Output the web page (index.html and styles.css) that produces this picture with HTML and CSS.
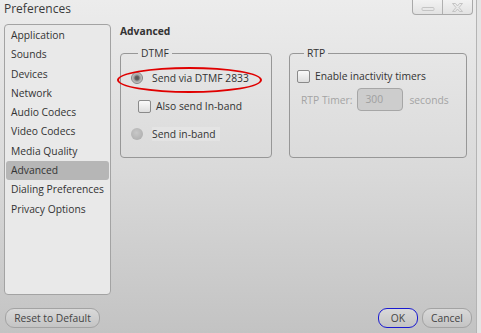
FILE: index.html
```html
<!DOCTYPE html>
<html>
	<head>
		<title>Preferences</title>
		<link rel="stylesheet" href="styles.css">
	</head>
	<body>
		<div class="window">
			<div class="titlebar">
				<span class="title">Preferences</span>
				<div class="caption">
					<span class="cbtn">
						<svg width="29" height="14" viewBox="0 0 29 14"><rect x="9" y="7.5" width="12" height="3" rx="1" fill="none" stroke="#c4c4c4"/></svg>
					</span>
					<span class="cbtn">
						<svg width="29" height="14" viewBox="0 0 29 14"><path d="M9.5 3.5h3l2 2.5 2-2.5h3l-3.5 4 3.5 4h-3l-2-2.5-2 2.5h-3l3.5-4z" fill="none" stroke="#c4c4c4"/></svg>
					</span>
				</div>
			</div>

			<div class="main">
				<ul class="sidebar">
					<li>Application</li>
					<li>Sounds</li>
					<li>Devices</li>
					<li>Network</li>
					<li>Audio Codecs</li>
					<li>Video Codecs</li>
					<li>Media Quality</li>
					<li class="selected">Advanced</li>
					<li>Dialing Preferences</li>
					<li>Privacy Options</li>
				</ul>

				<div class="content">
					<div class="heading">Advanced</div>
					<div class="groups">
						<fieldset class="group dtmf">
							<legend>DTMF</legend>
							<div class="row">
								<span class="radio checked"></span>
								<span>Send via DTMF 2833</span>
							</div>
							<div class="row sub">
								<span class="check"></span>
								<span>Also send In-band</span>
							</div>
							<div class="row">
								<span class="radio off"></span>
								<span class="faint">Send in-band</span>
							</div>
							<div class="mark"></div>
						</fieldset>

						<fieldset class="group rtp">
							<legend>RTP</legend>
							<div class="row">
								<span class="check"></span>
								<span>Enable inactivity timers</span>
							</div>
							<div class="row timer">
								<span class="dim">RTP Timer:</span>
								<span class="field">300</span>
								<span class="dim">seconds</span>
							</div>
						</fieldset>
					</div>
				</div>
			</div>

			<div class="footer">
				<button class="btn reset">Reset to Default</button>
				<button class="btn ok">OK</button>
				<button class="btn cancel">Cancel</button>
			</div>
		</div>
	</body>
</html>
```

FILE: styles.css
```css
body
{
	margin : 0;
	background : #e4e4e4;
	font-family : "Open Sans", "Noto Sans", sans-serif;
	font-size : 10.3px;
	color : #333;
}
.window
{
	width : 476px;
	height : 333px;
	border-right : 1px solid #b4b4b4;
	background : linear-gradient(#ececec, #dadada 50%, #c3c3c3);
	display : flex;
	flex-direction : column;
}
.titlebar
{
	height : 24px;
	display : flex;
	align-items : flex-start;
}
.title
{
	font-size : 12px;
	line-height : 18px;
	padding-left : 4px;
	color : #3a3a3a;
}
.caption
{
	margin-left : auto;
	margin-right : 3px;
	display : flex;
	border : 1px solid #a9a9a9;
	border-top : none;
	border-radius : 0 0 4px 4px;
	background : linear-gradient(#f2f2f2, #e2e2e2);
	height : 14px;
}
.cbtn
{
	width : 29px;
	height : 14px;
	display : flex;
}
.cbtn + .cbtn
{
	border-left : 1px solid #b0b0b0;
}
.main
{
	display : flex;
	padding-left : 4px;
}
.sidebar
{
	list-style : none;
	margin : 0;
	padding : 1px 1px 0 1px;
	width : 103px;
	height : 268px;
	background : #e9e9e9;
	border : 1px solid #a3a3a3;
	border-radius : 4px;
}
.sidebar li
{
	line-height : 19.3px;
	padding-left : 5px;
	margin-left : 0;
	white-space : nowrap;
}
.sidebar .selected
{
	background : #b6b6b6;
	border-radius : 3px;
}
.content
{
	margin-left : 9px;
}
.heading
{
	font-weight : bold;
	line-height : 14px;
	margin-bottom : 8px;
}
.groups
{
	display : flex;
	gap : 17px;
}
.group
{
	margin : 0;
	padding : 0;
	border : 1px solid #979797;
	border-radius : 4px;
	height : 112px;
	box-sizing : border-box;
	position : relative;
}
.group legend
{
	padding : 0 3px;
	margin-left : 7px;
	line-height : 14px;
}
.dtmf
{
	width : 152px;
	padding : 8px 0 0 10px;
}
.rtp
{
	width : 178px;
	padding : 6px 0 0 7px;
}
.row
{
	display : flex;
	align-items : center;
	height : 20px;
	margin-bottom : 8px;
	white-space : nowrap;
}
.radio
{
	width : 12px;
	height : 12px;
	border-radius : 50%;
	margin-right : 9px;
	box-sizing : border-box;
}
.radio.checked
{
	border : 1px solid #858585;
	background : radial-gradient(circle, #555 0, #666 2px, #9a9a9a 3px, #c8c8c8 5px);
}
.radio.off
{
	background : radial-gradient(circle at 45% 40%, #c8c8c8, #a9a9a9);
}
.check
{
	width : 13px;
	height : 13px;
	box-sizing : border-box;
	border : 1px solid #8a8a8a;
	border-radius : 2px;
	background : linear-gradient(#fafafa, #dedede);
	margin-right : 5px;
}
.sub
{
	padding-left : 7px;
}
.faint
{
	background : rgba(255, 255, 255, 0.18);
	padding-right : 4px;
}
.mark
{
	position : absolute;
	left : -4px;
	top : 7px;
	width : 141px;
	height : 22px;
	border : 2px solid #e00000;
	border-radius : 50%;
}
.timer
{
	height : 23px;
	margin-top : -6px;
	padding-left : 4px;
}
.dim
{
	color : #a4a4a4;
}
.field
{
	width : 46px;
	height : 23px;
	box-sizing : border-box;
	border : 1px solid #a6a6a6;
	border-radius : 4px;
	background : #cdcdcd;
	color : #a0a0a0;
	line-height : 21px;
	padding-left : 7px;
	margin : 0 6px 0 5px;
}
.footer
{
	display : flex;
	padding : 13px 4px 0 5px;
	gap : 4px;
}
.btn
{
	font-family : "Open Sans", "Noto Sans", sans-serif;
	font-size : 10.3px;
	color : #444;
	height : 20px;
	padding : 0;
	border : 1px solid #a3a3a3;
	border-radius : 9px;
	background : linear-gradient(#d9d9d9, #c4c4c4);
}
.reset
{
	width : 95px;
	margin-right : auto;
}
.ok
{
	width : 40px;
	border-color : #1a1ad0;
}
.cancel
{
	width : 50px;
}
```
